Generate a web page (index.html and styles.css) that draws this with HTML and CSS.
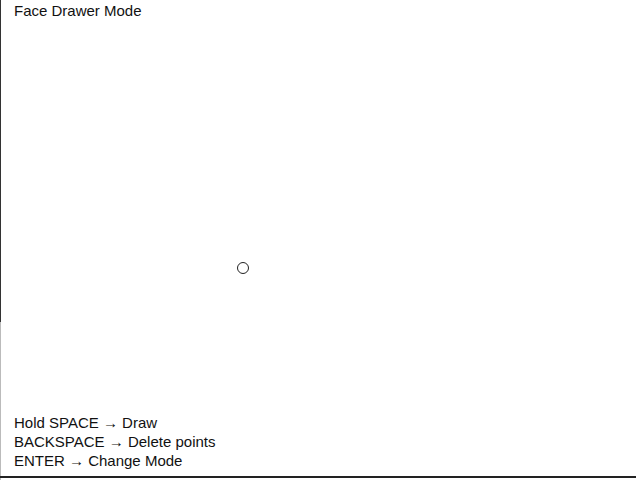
FILE: index.html
```html
<!DOCTYPE html>
<html>
<head>
<meta charset="utf-8">
<link rel="stylesheet" href="styles.css">
</head>
<body>
<div class="screen">
  <div class="title">Face Drawer Mode</div>
  <div class="canvas">
    <div class="point"></div>
  </div>
  <div class="help">
    <div>Hold SPACE → Draw</div>
    <div>BACKSPACE → Delete points</div>
    <div>ENTER → Change Mode</div>
  </div>
</div>
</body>
</html>
```

FILE: styles.css
```css
html, body {
  margin: 0;
  padding: 0;
  background: #ffffff;
}
.screen {
  position: relative;
  width: 640px;
  height: 480px;
  box-sizing: border-box;
  display: flex;
  flex-direction: column;
  font-family: "Liberation Sans", Arial, sans-serif;
  font-size: 15px;
  color: #111;
  padding: 1px 0 0 13px;
  border-left: 1px solid #bbb;
}
.screen::before {
  content: "";
  position: absolute;
  left: -1px;
  top: 0;
  width: 1px;
  height: 322px;
  background: #333;
}
.screen::after {
  content: "";
  position: absolute;
  left: -1px;
  bottom: 2px;
  width: 636px;
  height: 2px;
  background: #222;
}
.title {
  line-height: 19px;
}
.canvas {
  flex: 1;
  position: relative;
}
.point {
  position: absolute;
  left: 223px;
  top: 242px;
  width: 10px;
  height: 10px;
  border: 1.5px solid #222;
  border-radius: 50%;
  background: #fff;
}
.help {
  line-height: 19px;
  padding-bottom: 10px;
}
```
